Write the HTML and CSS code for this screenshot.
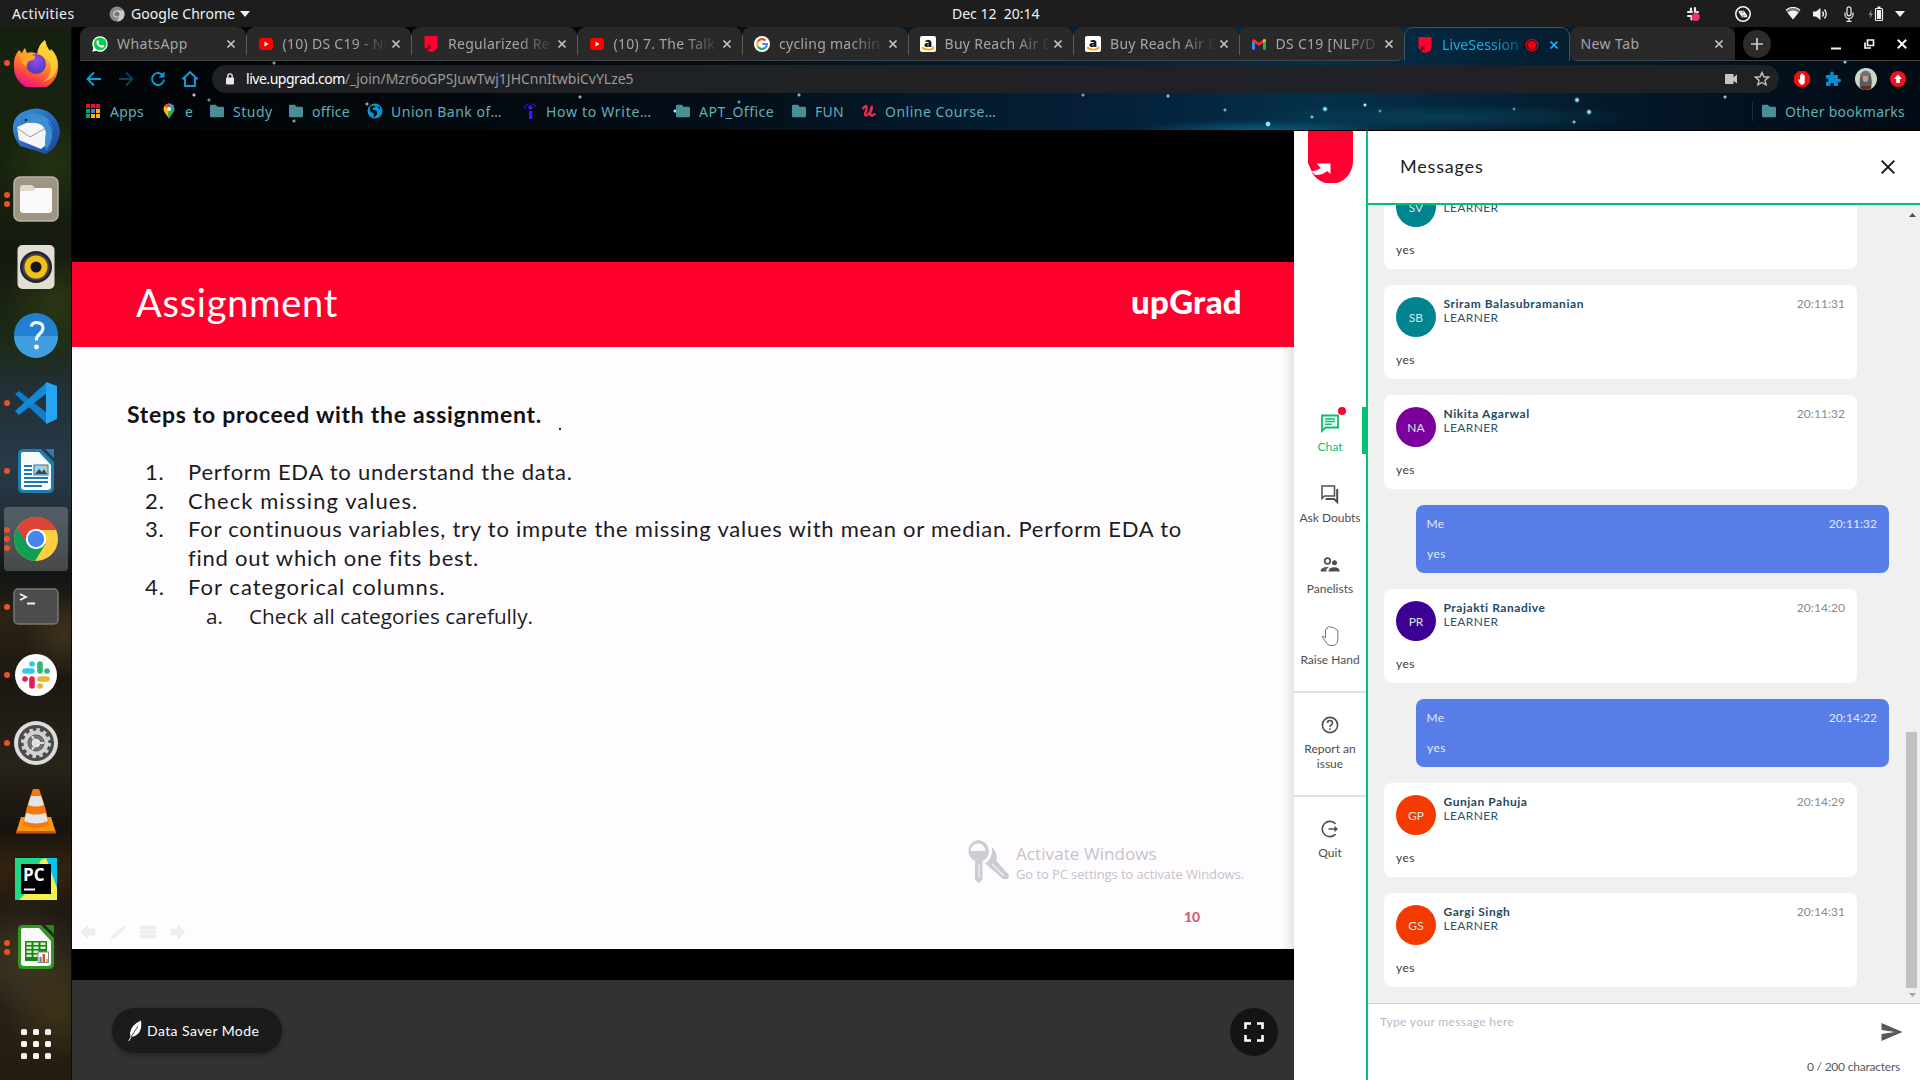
FILE: index.html
```html
<!DOCTYPE html>
<html lang="en">
<head>
<meta charset="utf-8">
<title>LiveSession</title>
<link rel="stylesheet" href="styles.css">
</head>
<body>
<svg class="defs" width="0" height="0" aria-hidden="true">
  <defs>
    <symbol id="x" viewBox="0 0 10 10"><path d="M1.5 1.5l7 7M8.5 1.5l-7 7" stroke="currentColor" stroke-width="1.7" fill="none"/></symbol>
    <symbol id="folder" viewBox="0 0 16 16"><path d="M1 3q0-1.200 1.200-1.200h4.600l1.700 2h5.300q1.200 0 1.200 1.200v8q0 1.200-1.200 1.200H2.200Q1 14.200 1 13z" fill="#4a8f98"/></symbol>
    <symbol id="yt" viewBox="0 0 16 16"><rect x="1" y="2" width="14" height="12" rx="3" fill="#f00"/><path d="M6.500 5.500v5L10.500 8z" fill="#fff"/></symbol>
    <symbol id="upg" viewBox="0 0 16 16"><path d="M1.500 0h13v9.500a6.500 6.500 0 0 1-9 5.800L1.500 11z" fill="#ff0030"/><path d="M4 9.500h3.500v3.500l-1-1-2 1.500-1-1L5 11z" fill="#40000c"/></symbol>
    <symbol id="amz" viewBox="0 0 16 16"><rect width="16" height="16" rx="2" fill="#fff"/><text x="8" y="10.500" font-family="Open Sans, sans-serif" font-weight="800" font-size="13" text-anchor="middle" fill="#111">a</text><path d="M2 11.500q6 4 11 1" stroke="#f90" stroke-width="1.600" fill="none"/><path d="M11.500 11h2.500v2.500" stroke="#f90" fill="none"/></symbol>
  </defs>
</svg>

<header class="topbar">
  <span class="activities">Activities</span>
  <svg class="tb-chrome" width="16" height="16" viewBox="0 0 16 16"><circle cx="8" cy="8" r="7.500" fill="#8a8a8a"/><path d="M8 4.500h6.700A7.500 7.500 0 0 1 8 15.500l3-5.800z" fill="#c9c9c9"/><circle cx="8" cy="8" r="3.600" fill="#ddd"/><circle cx="8" cy="8" r="2.600" fill="#777"/></svg>
  <span class="app-name">Google Chrome</span>
  <svg class="caret" width="10" height="6" viewBox="0 0 10 6"><path d="M0 0h10L5 6z" fill="#f2f2f2"/></svg>
  <span class="clock">Dec 12&nbsp; 20:14</span>
  <div class="tray">
    <svg width="14" height="16" viewBox="0 0 14 16"><g stroke="#e8e8e8" stroke-width="2.200" stroke-linecap="round"><path d="M5 2.500v3M9 2v4M2 6h4M11 6h1M2 10h3M5.500 10.500v3"/></g><circle cx="9.800" cy="11" r="4" fill="#f0307c"/></svg>
    <svg width="18" height="18" viewBox="0 0 18 18" fill="none" stroke="#f2f2f2"><circle cx="9" cy="9" r="7.200" stroke-width="1.600"/><path d="M5 6.500l3 0v4.500l-3-4.500M8 9l2 0M13 11.500l-3 0v-4.500l3 4.500" stroke-width="1.400"/></svg>
    <svg width="16" height="13" viewBox="0 0 16 13"><path d="M0.500 3.500Q8-2.500 15.500 3.500L8 12.500z" fill="#777"/><path d="M1 3Q8-2.200 15 3" stroke="#f2f2f2" stroke-width="1.200" fill="none"/><path d="M2.500 5.500Q8 1.500 13.500 5.500L8 12.500z" fill="#f2f2f2"/></svg>
    <svg width="16" height="14" viewBox="0 0 16 14"><path d="M0 4.500h3L7.500 1v12L3 9.500H0z" fill="#f2f2f2"/><path d="M9.500 4.500q2 2.500 0 5M11.500 2.500q3.500 4.500 0 9" stroke="#f2f2f2" stroke-width="1.300" fill="none"/></svg>
    <svg width="10" height="16" viewBox="0 0 10 16"><rect x="3" y="0.800" width="4" height="9" rx="2" fill="none" stroke="#f2f2f2" stroke-width="1.200"/><path d="M1 6.500v2a4 4 0 0 0 8 0v-2M5 12.500v2.800M2.500 15.300h5" stroke="#f2f2f2" stroke-width="1.200" fill="none"/></svg>
    <svg width="16" height="16" viewBox="0 0 16 16"><path d="M3.500 3.500L0.500 9h2l-1 4L5 7.500H3z" fill="#888"/><rect x="7.500" y="2.500" width="7" height="12" rx="1" fill="none" stroke="#f2f2f2" stroke-width="1.200"/><rect x="9" y="4" width="4" height="9" fill="#f2f2f2"/><rect x="9.500" y="0.500" width="3" height="2" fill="#f2f2f2"/></svg>
    <svg width="10" height="6" viewBox="0 0 10 6"><path d="M0 0h10L5 6z" fill="#f2f2f2"/></svg>
  </div>
</header>

<div class="desktop">
  <nav class="dock">
    <div class="app"><div class="dots"><i></i></div>
      <svg width="46" height="48" viewBox="0 0 46 48"><defs><linearGradient id="ff" x1=".8" y1="0" x2=".4" y2="1"><stop offset="0" stop-color="#fff04a"/><stop offset=".45" stop-color="#ff9a1f"/><stop offset=".75" stop-color="#ff4a3d"/><stop offset="1" stop-color="#e2128a"/></linearGradient><radialGradient id="fp" cx=".5" cy=".3" r=".7"><stop offset="0" stop-color="#9a4cf0"/><stop offset="1" stop-color="#4a3ab8"/></radialGradient></defs><path d="M6 11l3 3q1-3 3-5l2 5q6-2 10 1 1-9 8-14 1 7 5 11l1-2q8 7 7 19A22 22 0 0 1 1 28Q0 18 6 11z" fill="url(#ff)"/><path d="M32 1q-8 7-6 15 12 3 12 14-1 9-9 13 15-3 15-18 0-9-7-13-4-5-5-11z" fill="#ffd43a" opacity=".75"/><circle cx="23" cy="25" r="10" fill="url(#fp)"/><path d="M6 16q8-3 16 1 1 4-6 5-3 3-2 6-5-2-6-8z" fill="#ffa52b"/></svg></div>
    <div class="app"><div class="dots"></div>
      <svg width="48" height="48" viewBox="0 0 48 48"><defs><linearGradient id="tbg" x1="0" y1="0" x2="1" y2="1"><stop offset="0" stop-color="#3b97dd"/><stop offset="1" stop-color="#1a3f9c"/></linearGradient></defs><path d="M13 4Q26-2 38 6q10 8 10 20-2 15-14 21l-6-2-20-6Q-3 25 3 12q4-6 10-8z" fill="url(#tbg)"/><path d="M5 20l14-6 15 5v19l-5 4-22-9z" fill="#f6f6f8"/><path d="M5 21l13 9 16-9" fill="none" stroke="#999" stroke-width="1"/><path d="M12 11q8-8 20-2 10 6 9 20-1 9-7 15-2-8 0-19Q31 14 18 16q-5 0-6-5z" fill="#3a8fd4"/><path d="M36 14q10 14-1 28M40 15q8 12-1 24" fill="none" stroke="#1c56ac"/><circle cx="14" cy="13" r="1.500" fill="#4a2020"/></svg></div>
    <div class="app"><div class="dots"><i></i><i></i></div>
      <svg width="46" height="46" viewBox="0 0 46 46"><rect x="1" y="1" width="44" height="44" rx="6" fill="#9d9684" stroke="#b9b3a3" stroke-width="1.500"/><path d="M7 12q0-3 3-3h9l3 3h14q3 0 3 3v18H7z" fill="#ded9cb"/><path d="M7 16q0-1 2-1h11l3-3h14q2 0 2 2v20q0 3-3 3H10q-3 0-3-3z" fill="#fafafa"/></svg></div>
    <div class="app"><div class="dots"></div>
      <svg width="40" height="46" viewBox="0 0 40 46"><rect x="1.500" y="1" width="37" height="44" rx="5" fill="#e2ded3"/><circle cx="20" cy="23" r="16" fill="#26242e"/><circle cx="20" cy="23" r="13.500" fill="#44434c"/><circle cx="20" cy="23" r="11.500" fill="#f2c118"/><circle cx="20" cy="23" r="5.500" fill="#17151b"/></svg></div>
    <div class="app"><div class="dots"></div>
      <svg width="46" height="46" viewBox="0 0 46 46"><circle cx="23" cy="23" r="22" fill="#2380d0"/><path d="M1 24h44a22 22 0 0 1-44 0z" fill="#419fe0"/><path d="M18 14.500q1.500-4 6-4 6 .5 6 5.500 0 3-3.500 6t-3 6.500" fill="none" stroke="#fff" stroke-width="3"/><circle cx="23.500" cy="35" r="2.400" fill="#fff"/></svg></div>
    <div class="app"><div class="dots"><i></i></div>
      <svg width="44" height="44" viewBox="0 0 44 44"><path d="M1 13l4-3 28 22v11z" fill="#0f7ccc"/><path d="M1 30l4 4L33 12V1z" fill="#1588d8"/><path d="M32 1l11 4v33l-11 5z" fill="#27a5f4"/></svg></div>
    <div class="app"><div class="dots"><i></i></div>
      <svg width="38" height="46" viewBox="0 0 38 46"><path d="M6 1h18l13 13v26q0 5-5 5H6q-5 0-5-5V6q0-5 5-5z" fill="#1f7cb0"/><path d="M28 1h9v9z" fill="#2b7fae"/><path d="M6 4h16l12 13v22q0 3-3 3H7q-3 0-3-3V6q0-2 2-2z" fill="#fafafa"/><path d="M7 18h8M7 22h8M7 26h8M7 30h24M7 34h24M7 38h18" stroke="#1f7cb0" stroke-width="2"/><rect x="17" y="17" width="14" height="10" fill="#9ad4f0" stroke="#1f7cb0"/><path d="M18 26l4-5 3 3 2-3 3 5z" fill="#444"/><path d="M27 18h3v3z" fill="#fb3"/></svg></div>
    <div class="app active"><div class="dots"><i></i><i></i><i></i></div>
      <svg width="46" height="46" viewBox="0 0 46 46"><circle cx="23" cy="23" r="22" fill="#ffcd40"/><path d="M23 23L4 12A22 22 0 0 0 22 45l10.500-17z" fill="#129d57"/><path d="M4 12a22 22 0 0 1 39.500 2H23l-9.500 13z" fill="#dc4437"/><circle cx="23" cy="23" r="10.200" fill="#fff"/><circle cx="23" cy="23" r="8.200" fill="#4285f4"/></svg></div>
    <div class="app"><div class="dots"><i></i></div>
      <svg width="46" height="38" viewBox="0 0 46 38"><rect x="1" y="1" width="44" height="35" rx="4" fill="#4c4c4c" stroke="#777" stroke-width="1.500"/><path d="M7 6l6 3-6 3M14 15.500h8" stroke="#f2f2f2" stroke-width="1.800" fill="none"/></svg></div>
    <div class="app"><div class="dots"><i></i></div>
      <svg width="42" height="42" viewBox="0 0 42 42"><circle cx="21" cy="21" r="21" fill="#fff"/><g stroke-width="5.600" stroke-linecap="round"><path d="M10 17h7M17 10h.1" stroke="#36c5f0"/><path d="M25 10v7M32 17h.1" stroke="#2eb67d"/><path d="M25 25h7M25 32h.1" stroke="#ecb22e"/><path d="M17 25v7M10 25h.1" stroke="#e01e5a"/></g></svg></div>
    <div class="app"><div class="dots"><i></i></div>
      <svg width="46" height="46" viewBox="0 0 46 46"><circle cx="23" cy="23" r="22" fill="#dcdcdc"/><circle cx="23" cy="23" r="18" fill="#4a4a4a"/><circle cx="23" cy="23" r="13.500" fill="none" stroke="#d2d2d2" stroke-width="3" stroke-dasharray="3.500 3.570"/><circle cx="23" cy="23" r="10.500" fill="none" stroke="#d2d2d2" stroke-width="4"/><circle cx="23" cy="23" r="6.500" fill="none" stroke="#777" stroke-width="2.500"/><circle cx="23" cy="23" r="4.500" fill="#e5e5e5"/><path d="M23 23h8M23 23l-4-7M23 23l-4 7" stroke="#ddd" stroke-width="2"/></svg></div>
    <div class="app"><div class="dots"></div>
      <svg width="42" height="46" viewBox="0 0 42 46"><path d="M6 29h30l5 16H1z" fill="#fb9414"/><path d="M1 43h40v2.500H1z" fill="#c95a0a"/><path d="M18 1h6q7 18 10 36-13 6-26 0Q11 19 18 1z" fill="#f47a0c"/><path d="M16 8h10l3 9q-8 3-16 0zM11.500 25q9.500 3 19 0l2.500 8q-12 5-24 0z" fill="#e3e6e8"/></svg></div>
    <div class="app"><div class="dots"></div>
      <svg width="42" height="42" viewBox="0 0 42 42"><rect width="42" height="42" fill="#21d789"/><path d="M32 0h10v30L30 12z" fill="#07c3f2"/><path d="M26 2l5-2 11 30v12H4l6-6z" fill="#f5f04d"/><rect x="6" y="6" width="30" height="30" fill="#000"/><text x="8" y="23" font-family="Open Sans, sans-serif" font-weight="700" font-size="17" fill="#fff">PC</text><path d="M9 31.500h11" stroke="#fff" stroke-width="2"/></svg></div>
    <div class="app"><div class="dots"><i></i><i></i></div>
      <svg width="38" height="46" viewBox="0 0 38 46"><path d="M6 1h18l13 13v26q0 5-5 5H6q-5 0-5-5V6q0-5 5-5z" fill="#2e9a1f"/><path d="M28 1h9v9z" fill="#258a17"/><path d="M6 4h16l12 13v22q0 3-3 3H7q-3 0-3-3V6q0-2 2-2z" fill="#fafafa"/><rect x="8" y="17" width="22" height="20" fill="#1d8413"/><path d="M9.500 18.500h5v2.500h-5zM16.500 18.500h5v2.500h-5zM23.500 18.500h5v2.500h-5zM9.500 22.500h5V25h-5zM16.500 22.500h5V25h-5zM23.500 22.500h5V25h-5zM9.500 26.500h5V29h-5zM16.500 26.500h5V29h-5zM9.500 30.500h5V33h-5zM16.500 30.500h5V33h-5z" fill="#d3f0cd"/><rect x="21" y="28" width="10.500" height="10.500" fill="#fff" stroke="#888"/><path d="M22.500 33h2v5h-2z" fill="#2a8ccd"/><path d="M25.500 30h2.500v8h-2.500z" fill="#e1551c"/><path d="M29 35h2v3h-2z" fill="#f3b32a"/></svg></div>
    <svg class="grid-icon" width="30" height="30" viewBox="0 0 30 30" fill="#f4f4f4"><rect width="6" height="6" rx="1.500"/><rect x="12" width="6" height="6" rx="1.500"/><rect x="24" width="6" height="6" rx="1.500"/><rect y="12" width="6" height="6" rx="1.500"/><rect x="12" y="12" width="6" height="6" rx="1.500"/><rect x="24" y="12" width="6" height="6" rx="1.500"/><rect y="24" width="6" height="6" rx="1.500"/><rect x="12" y="24" width="6" height="6" rx="1.500"/><rect x="24" y="24" width="6" height="6" rx="1.500"/></svg>
  </nav>

  <div class="browser">
    <div class="chrome">
      <div class="tabstrip">
        <div class="tabs">
          <div class="tab"><svg class="fav" viewBox="0 0 16 16"><path d="M8 .2a7.800 7.800 0 1 1-3.800 14.600L.3 15.800l1-3.900A7.800 7.800 0 0 1 8 .2z" fill="#fff"/><circle cx="8.100" cy="7.900" r="6.400" fill="#0bcb4c"/><path d="M5.500 4.300l1 .1.800 1.900-.7 1q1 1.700 2.700 2.400l.9-1 2 1q-.3 2-2.400 2-4.500-.8-5.400-5.200.1-1.600 1.100-2.200z" fill="#fff"/></svg><span class="title">WhatsApp</span><svg class="close"><use href="#x"/></svg></div>
          <div class="tab"><svg class="fav"><use href="#yt"/></svg><span class="title">(10) DS C19 - NL</span><svg class="close"><use href="#x"/></svg></div>
          <div class="tab"><svg class="fav"><use href="#upg"/></svg><span class="title">Regularized Re</span><svg class="close"><use href="#x"/></svg></div>
          <div class="tab"><svg class="fav"><use href="#yt"/></svg><span class="title">(10) 7. The Talk</span><svg class="close"><use href="#x"/></svg></div>
          <div class="tab"><svg class="fav" viewBox="0 0 16 16"><circle cx="8" cy="8" r="8" fill="#fff"/><g fill="none" stroke-width="2.200"><path d="M11.500 4.500A5 5 0 0 0 3.800 5.500" stroke="#ea4335"/><path d="M3.800 5.500a5 5 0 0 0 0 5" stroke="#fbbc05"/><path d="M3.800 10.500a5 5 0 0 0 7.500 1.200" stroke="#34a853"/><path d="M11.300 11.700Q13 10 12.900 8H8.300" stroke="#4285f4"/></g></svg><span class="title">cycling machin</span><svg class="close"><use href="#x"/></svg></div>
          <div class="tab"><svg class="fav"><use href="#amz"/></svg><span class="title">Buy Reach Air E</span><svg class="close"><use href="#x"/></svg></div>
          <div class="tab"><svg class="fav"><use href="#amz"/></svg><span class="title">Buy Reach Air E</span><svg class="close"><use href="#x"/></svg></div>
          <div class="tab last-idle"><svg class="fav" viewBox="0 0 16 16"><path d="M1 4v9.500h3V7l4 3 4-3v6.500h3V4l-2-1-5 3.700L3 3z" fill="#e33"/><path d="M1 6v7.500h3V7z" fill="#4285f4"/><path d="M12 7v6.500h3V5z" fill="#34a853"/><path d="M12 3.600V7l3-2V4q-1.500-2-3-.4z" fill="#fbbc04"/></svg><span class="title">DS C19 [NLP/D</span><svg class="close"><use href="#x"/></svg></div>
          <div class="tab current"><svg class="fav"><use href="#upg"/></svg><span class="title">LiveSession</span><svg class="rec" width="14" height="14" viewBox="0 0 14 14"><circle cx="7" cy="7" r="5.700" fill="none" stroke="#e00010" stroke-width="1.200"/><circle cx="7" cy="7" r="4.200" fill="#f00015"/></svg><svg class="close"><use href="#x"/></svg></div>
          <div class="tab newtab"><span class="title">New Tab</span><svg class="close"><use href="#x"/></svg></div>
        </div>
        <div class="strip-end">
          <svg width="28" height="28" viewBox="0 0 28 28"><circle cx="14" cy="14" r="14" fill="#2b2b2b"/><path d="M14 8v12M8 14h12" stroke="#ccc" stroke-width="1.700"/></svg>
          <div class="winbtns">
            <svg width="12" height="12" viewBox="0 0 12 12"><path d="M1 10.500h10" stroke="#f4f4f4" stroke-width="2"/></svg>
            <svg width="12" height="12" viewBox="0 0 12 12"><path d="M4.500 2h6v5.500h-6zM2 4.500V10h6" fill="none" stroke="#f4f4f4" stroke-width="1.700"/></svg>
            <svg width="12" height="12" viewBox="0 0 10 10" color="#f4f4f4"><use href="#x"/></svg>
          </div>
        </div>
      </div>

      <div class="toolbar">
        <svg width="18" height="18" viewBox="0 0 18 18" fill="none" stroke="#08a0e0" stroke-width="1.900"><path d="M16 9H3M9 2.500L2.500 9 9 15.500"/></svg>
        <svg width="18" height="18" viewBox="0 0 18 18" fill="none" stroke="#0b4256" stroke-width="1.900"><path d="M2 9h13M9 2.500L15.500 9 9 15.500"/></svg>
        <svg width="18" height="18" viewBox="0 0 18 18"><path d="M15 9.500A6 6 0 1 1 13 4.500" fill="none" stroke="#08a0e0" stroke-width="1.900"/><path d="M15.500 1.500v6h-6z" fill="#08a0e0"/></svg>
        <svg width="18" height="18" viewBox="0 0 18 18" fill="none" stroke="#08a0e0" stroke-width="1.900"><path d="M1.500 9.300L9 2l7.500 7.300M4 8v8h10V8"/></svg>
        <div class="omnibox">
          <svg width="10" height="12" viewBox="0 0 10 12"><rect x="1" y="4.500" width="8" height="7" rx="1" fill="#e8e8e8"/><path d="M2.800 5V3a2.200 2.200 0 0 1 4.400 0v2" fill="none" stroke="#e8e8e8" stroke-width="1.300"/></svg>
          <span class="url"><b>live.upgrad.com</b><span class="path">/_join/Mzr6oGPSJuwTwj1JHCnnItwbiCvYLze5</span></span>
          <svg width="14" height="10" viewBox="0 0 14 10"><path d="M1 0h8.500v3.300L13 .5v9L9.500 6.700V10H1z" fill="#c4c4c4"/></svg>
          <svg width="16" height="16" viewBox="0 0 16 16"><path d="M8 1.500l1.900 4.300 4.700.4-3.600 3.100 1.100 4.600L8 11.500l-4.100 2.400L5 9.300 1.400 6.200l4.700-.4z" fill="none" stroke="#c4c4c4" stroke-width="1.400"/></svg>
        </div>
        <div class="exts">
          <svg width="18" height="18" viewBox="0 0 18 18"><path d="M5.500 1h7L17 5.500v7L12.500 17h-7L1 12.500v-7z" fill="#f20d0d"/><path d="M5 9.500l1.300-.3.700 1V4.800h1.100v4-5.300h1.200v5-4.500h1.200v4.800-3.600h1.200V11.500q0 3.300-3 3.300-1.700 0-2.500-2z" fill="#fff"/></svg>
          <svg width="18" height="18" viewBox="0 0 18 18"><path d="M2 5h4.500q-1-3.500 1.500-3.500T9.500 5H14v4q3-1 3 1.500T14 12v4H10q.5-3-1.800-3T6.500 16H2v-4q2.500 0 2.500-2T2 8.500z" fill="#058fd0"/></svg>
          <svg width="22" height="22" viewBox="0 0 22 22"><circle cx="11" cy="11" r="11" fill="#cfd6cc"/><path d="M5 20q-1-9 1-14 5-6 9 0 3 5 1 14-6 4-11 0z" fill="#555b66"/><ellipse cx="10.500" cy="10" rx="3" ry="4" fill="#c79a80"/><path d="M5 6q6-7 11 0l-1 2H6z" fill="#6e747c"/><path d="M6 18h10v2.500q-5 2.500-10 0z" fill="#632d18"/></svg>
          <svg width="16" height="16" viewBox="0 0 16 16"><circle cx="8" cy="8" r="8" fill="#f01020"/><path d="M8 3.500L12 8H9.800v4H6.200V8H4z" fill="#fff"/></svg>
        </div>
      </div>

      <div class="bookmarks">
        <div class="bm apps"><svg viewBox="0 0 16 16"><path d="M1 1h4v4H1zM6 1h4v4H6zM11 1h4v4h-4z" fill="#e8112d"/><path d="M1 6h4v4H1zM1 11h4v4H1z" fill="#18a05a"/><path d="M6 6h4v4H6z" fill="#3b7ef0"/><path d="M11 6h4v4h-4zM6 11h4v4H6zM11 11h4v4h-4z" fill="#fbb20a"/><path d="M5.500 0v16M10.500 0v16M0 5.500h16M0 10.500h16" stroke="#02080c"/></svg><span>Apps</span></div>
        <div class="bm"><svg viewBox="0 0 16 16"><path d="M8 .5a5.500 5.500 0 0 0-5.500 5.500q0 2 1.500 4L8 15.500z" fill="#fbbc04"/><path d="M8 .5A5.500 5.500 0 0 1 13.500 6q0 2-1.500 4L8 15.500 7 12z" fill="#34a853"/><path d="M8 .5A5.500 5.500 0 0 0 3.300 3L8 6z" fill="#ea4335"/><path d="M8 .5A5.500 5.500 0 0 1 13 4L8 7z" fill="#4285f4"/><circle cx="8" cy="6" r="2" fill="#fff"/></svg><span>e</span></div>
        <div class="bm wide"><svg><use href="#folder"/></svg><span>Study</span></div>
        <div class="bm"><svg><use href="#folder"/></svg><span>office</span></div>
        <div class="bm wide"><svg viewBox="0 0 16 16"><circle cx="8" cy="8" r="7.500" fill="#0a95d5"/><path d="M3 4q3-3 6 0-4 0-3 3 5 0 4 4-1 3-4 3 2-3 0-4Q2 9 3 4zM10 3l3 1v3z" fill="#021018"/></svg><span>Union Bank of…</span></div>
        <div class="bm wider"><svg viewBox="0 0 16 16"><circle cx="8.500" cy="4.500" r="2.200" fill="#4a10ff"/><path d="M7 8h3.200v8H7z" fill="#4a10ff"/><path d="M2.500 6Q3 1 7 .8M10 .8q3 .7 3.500 3" stroke="#4a10ff" fill="none"/></svg><span>How to Write…</span></div>
        <div class="bm wide"><svg><use href="#folder"/></svg><span>APT_Office</span></div>
        <div class="bm"><svg><use href="#folder"/></svg><span>FUN</span></div>
        <div class="bm wide"><svg viewBox="0 0 16 16"><path d="M1.500 6Q5 1.500 5.500 3.500T4 11q0 3 3.500 0T11 3Q8.500 9 9.500 11.500t5-1" fill="none" stroke="#ef2b4c" stroke-width="2.300"/></svg><span>Online Course…</span></div>
        <div class="bm other"><svg><use href="#folder"/></svg><span>Other bookmarks</span></div>
      </div>
    </div>

    <div class="page">
      <main class="player">
        <section class="slide">
          <div class="slide-head"><h1>Assignment</h1><span class="brand">upGrad</span></div>
          <div class="slide-body">
            <h2>Steps to proceed with the assignment.</h2>
            <ol class="steps">
              <li><span>1.</span><span>Perform EDA to understand the data.</span></li>
              <li class="loose"><span>2.</span><span>Check missing values.</span></li>
              <li><span>3.</span><span>For continuous variables, try to impute the missing values with mean or median. Perform EDA to<br>find out which one fits best.</span></li>
              <li class="loose"><span>4.</span><span>For categorical columns.</span></li>
              <li class="sub"><span>a.</span><span>Check all categories carefully.</span></li>
            </ol>
            <i class="speck"></i>
            <div class="activate">
              <svg width="42" height="46" viewBox="0 0 42 46"><path d="M11 1a11 11 0 0 1 4.500 21v18.500L12 44l-4-3V22A11 11 0 0 1 11 1zM3.500 12h15q-1-7.500-7.500-7.500T3.500 12z" fill="#cfccd1"/><path d="M25 8q6 6 4.500 14L42 36l-1 4h-5L20 26l-2-1.500Q26 20 25 8z" fill="#cfccd1"/><path d="M12 25v14M25 25l12 12" stroke="#f1eff2" stroke-width="1.300"/></svg>
              <div><p class="big">Activate Windows</p><p class="small">Go to PC settings to activate Windows.</p></div>
            </div>
            <span class="pageno">10</span>
            <div class="slide-nav">
              <svg width="16" height="16" viewBox="0 0 16 16"><path d="M1 8l7-7v4h7v6H8v4z"/></svg>
              <svg width="16" height="16" viewBox="0 0 16 16"><path d="M1 15l2-4L14 2l1 2L6 13z"/></svg>
              <svg width="16" height="16" viewBox="0 0 16 16"><path d="M0 2h16v3H0zM0 6.500h16v3H0zM0 11h16v3H0z"/></svg>
              <svg width="16" height="16" viewBox="0 0 16 16"><path d="M15 8L8 1v4H1v6h7v4z"/></svg>
            </div>
          </div>
        </section>
        <footer class="controls">
          <div class="saver"><svg width="14" height="22" viewBox="0 0 14 22"><path d="M13 .5Q3 5 2 13l.5 4L.3 21h1l2.200-4Q11 16 13 8q.7-4 0-7.500z" fill="#fff"/><path d="M3 17L10 6" stroke="#1b1b1b" stroke-width=".8"/></svg><span>Data Saver Mode</span></div>
          <div class="full"><svg width="20" height="20" viewBox="0 0 20 20"><path d="M1.500 7V1.500H7M13 1.500h5.500V7M18.500 13v5.500H13M7 18.500H1.500V13" fill="none" stroke="#fff" stroke-width="2.600"/></svg></div>
        </footer>
      </main>

      <aside class="rail">
        <svg class="logo" width="45" height="52" viewBox="0 0 46 52" preserveAspectRatio="none"><path d="M0 0h46v30a22.500 22.500 0 0 1-41 13L0 32z" fill="#ff0030"/><path d="M9 32.500h14V43l-3.500-3q-5 4.500-12 4L3 40q5 1 10-3z" fill="#fff"/></svg>
        <div class="item on"><svg width="20" height="20" viewBox="0 0 20 20" fill="none" stroke="currentColor" stroke-width="1.800"><path d="M2 18V2.500h16v12H5.500z"/><path d="M5 6h10M5 8.600h10M5 11.200h7" stroke-width="1.500"/></svg><i class="badge"></i><span>Chat</span></div>
        <div class="item"><svg width="20" height="20" viewBox="0 0 20 20" fill="none" stroke="currentColor" stroke-width="1.500"><path d="M2 14.500V2h12.500v10H4.500z"/><path d="M17.200 5v13l-3-3H5.500" stroke-width="2"/></svg><span>Ask Doubts</span></div>
        <div class="item"><svg width="20" height="20" viewBox="0 0 20 20" fill="currentColor"><circle cx="7.500" cy="6" r="2.800" fill="none" stroke="currentColor" stroke-width="1.700"/><circle cx="14.500" cy="7.800" r="2.500"/><path d="M.5 16.500q0-4.500 7-4.500l1.500.1q-2 1-2.500 2.500-3 0-3.500.4h3.500v1.500zM8.500 16.500q0-4.300 6-4.300 5 0 5.300 4.300z"/></svg><span>Panelists</span></div>
        <div class="item"><svg width="20" height="20" viewBox="0 0 20 20" fill="none" stroke="#777" stroke-width="1"><path d="M5.500 12V4q.2-1.500 1.800-1.300V1.500Q9-.3 10.500 1.200q1.500-.8 2.700.7 1.800-.4 2.300 1.300 2.300 0 2.300 2V14q-.4 5-5 5.500H10q-2 0-3.300-2.500L2 10.500Q3.500 9 5.500 12z"/></svg><span>Raise Hand</span></div>
        <div class="item tall"><svg width="20" height="20" viewBox="0 0 20 20" fill="none" stroke="currentColor" stroke-width="1.600"><circle cx="10" cy="10" r="7.600"/><path d="M7.500 8q0-2.500 2.500-2.500T12.500 8q0 1-1.300 2-1.200.8-1.200 2M10 13.200v1.600"/></svg><span>Report an<br>issue</span></div>
        <div class="item tall"><svg width="20" height="20" viewBox="0 0 20 20" fill="none" stroke="currentColor" stroke-width="1.600"><path d="M15.500 4.900A7.600 7.600 0 1 0 15.500 15.100M8.500 10h7.500"/><path d="M14.500 6.800v6.400L18 10z" fill="currentColor" stroke="none"/></svg><span>Quit</span></div>
      </aside>

      <section class="chat">
        <header><span>Messages</span><svg width="16" height="16" viewBox="0 0 16 16"><path d="M1.700 1.700l12.600 12.600M14.300 1.700L1.700 14.300" stroke="#111" stroke-width="1.900"/></svg></header>
        <div class="scroll">
          <div class="list">
            <article class="msg"><div class="av teal">SV</div><div class="who"><b>&nbsp;</b><span>LEARNER</span></div><time></time><p>yes</p></article>
            <article class="msg"><div class="av teal">SB</div><div class="who"><b>Sriram Balasubramanian</b><span>LEARNER</span></div><time>20:11:31</time><p>yes</p></article>
            <article class="msg"><div class="av purple">NA</div><div class="who"><b>Nikita Agarwal</b><span>LEARNER</span></div><time>20:11:32</time><p>yes</p></article>
            <article class="msg me"><div class="who"><span>Me</span></div><time>20:11:32</time><p>yes</p></article>
            <article class="msg"><div class="av indigo">PR</div><div class="who"><b>Prajakti Ranadive</b><span>LEARNER</span></div><time>20:14:20</time><p>yes</p></article>
            <article class="msg me"><div class="who"><span>Me</span></div><time>20:14:22</time><p>yes</p></article>
            <article class="msg"><div class="av orange">GP</div><div class="who"><b>Gunjan Pahuja</b><span>LEARNER</span></div><time>20:14:29</time><p>yes</p></article>
            <article class="msg"><div class="av orange">GS</div><div class="who"><b>Gargi Singh</b><span>LEARNER</span></div><time>20:14:31</time><p>yes</p></article>
          </div>
          <div class="bar"><svg width="7" height="4" viewBox="0 0 7 4"><path d="M0 4h7L3.500 0z" fill="#505050"/></svg><i></i><svg width="7" height="4" viewBox="0 0 7 4"><path d="M0 0h7L3.500 4z" fill="#a0a0a0"/></svg></div>
        </div>
        <div class="compose">
          <span class="ph">Type your message here</span>
          <svg width="22" height="18" viewBox="0 0 22 18"><path d="M.5 0L21.500 9 .5 18v-7L14 9 .5 7z" fill="#58585a"/></svg>
          <span class="count">0 / 200 characters</span>
        </div>
      </section>
    </div>
  </div>
</div>
</body>
</html>
```
FILE: styles.css
```css
* { box-sizing: border-box; }
html, body { margin: 0; height: 100%; overflow: hidden; }
body { display: flex; flex-direction: column; height: 1080px; font-family: "Noto Sans", sans-serif; background: #000; }
svg { display: block; flex: none; }
.defs { position: absolute; }
p, h1, h2, ol { margin: 0; padding: 0; }

/* GNOME top bar */
.topbar { height: 27px; flex: none; background: #1d1d1d; color: #f2f2f2; display: flex; align-items: center; font-size: 14px; padding: 0 15px 0 12px; line-height: 27px; }
.activities { width: 97px; letter-spacing: .42px; }
.app-name { margin-left: 6px; width: 108px; letter-spacing: .05px; }
.caret { margin-left: 1px; }
.clock { margin-left: 702px; width: 88px; white-space: nowrap; }
.tray { margin-left: auto; display: flex; align-items: center; gap: 12px; }
.tray svg:nth-child(2) { margin-left: 22px; }
.tray svg:nth-child(3) { margin-left: 21px; }
.tray svg:nth-child(5) { margin-left: 3px; }
.tray svg:nth-child(6) { margin-left: 2px; }
.tray svg:nth-child(7) { margin-left: -1px; }

.desktop { flex: 1; display: flex; min-height: 0; }

/* Dock */
.dock { width: 72px; flex: none; padding-top: 2px; display: flex; flex-direction: column; border-right: 1px solid #0a0a0a;
  background:
    radial-gradient(circle at 70% 13%, rgba(60,80,20,.35), transparent 50px),
    radial-gradient(circle at 80% 26%, rgba(70,85,15,.4), transparent 55px),
    radial-gradient(circle at 30% 88%, rgba(95,78,45,.45), transparent 60px),
    radial-gradient(circle at 80% 93%, rgba(90,75,30,.45), transparent 55px),
    radial-gradient(circle at 90% 58%, rgba(90,75,40,.4), transparent 40px),
    linear-gradient(#15200f 0, #18230f 13%, #14190f 22%, #1c2b17 30%, #22313a 35%, #283a47 42%, #202d36 47%, #131414 52%, #2c2314 56%, #1b1711 62%, #29241a 70%, #17130e 76%, #33230f 80%, #1c1812 84%, #28231a 90%, #241c0f 100%); }
.app { position: relative; height: 68px; flex: none; display: flex; align-items: center; justify-content: center; }
.app.active::before { content: ""; position: absolute; inset: 2px 3px 2px 4px; background: rgba(255,255,255,.22); border-radius: 4px; }
.dots { position: absolute; left: 4px; top: 0; height: 68px; display: flex; flex-direction: column; justify-content: center; gap: 3px; }
.app > svg { z-index: 1; }
.dots i { width: 6px; height: 6px; border-radius: 50%; background: #e95420; }
.grid-icon { margin: 48px 0 0 21px; }

/* Browser chrome */
.browser { flex: 1; display: flex; flex-direction: column; min-width: 0; }
.chrome { height: 104px; flex: none; border-bottom: 1px solid #000;
  background:
    radial-gradient(circle at 603px 84px, #a8e8ff 0 1px, transparent 2px),
    radial-gradient(circle at 122px 68px, #b8c4cc 0 1px, transparent 2px),
    radial-gradient(circle at 137px 73px, #77828a 0 1px, transparent 2px),
    radial-gradient(circle at 202px 36px, #8a949c 0 1px, transparent 2px),
    radial-gradient(circle at 222px 94px, #8a949c 0 1px, transparent 2px),
    radial-gradient(circle at 295px 77px, #9aa6b0 0 1px, transparent 2px),
    radial-gradient(circle at 508px 70px, #9aa6b0 0 1px, transparent 2px),
    radial-gradient(circle at 727px 68px, #8ab0c8 0 1px, transparent 2px),
    radial-gradient(circle at 667px 75px, #6a90a8 0 1px, transparent 2px),
    radial-gradient(circle at 1011px 68px, #6aa0b8 0 1px, transparent 2px),
    radial-gradient(circle at 1096px 69px, #9ac8dc 0 1px, transparent 2px),
    radial-gradient(circle at 1153px 83px, #7aa8bc 0 1px, transparent 2px),
    radial-gradient(circle at 1196px 97px, #96ecff 0 1.500px, transparent 3px),
    radial-gradient(circle at 1253px 82px, #8ee4ff 0 1px, transparent 3px),
    radial-gradient(circle at 1293px 78px, #9fd 0 1px, transparent 2px),
    radial-gradient(circle at 1240px 90px, #6ac0e0 0 1px, transparent 2px),
    radial-gradient(circle at 1308px 84px, #5aa0c0 0 .5px, transparent 2px),
    radial-gradient(circle at 1442px 82px, #5aa0c0 0 .5px, transparent 2px),
    radial-gradient(circle at 1505px 73px, #8ee4ff 0 1px, transparent 3px),
    radial-gradient(circle at 1517px 85px, #8ee4ff 0 1px, transparent 3px),
    radial-gradient(circle at 1502px 95px, #6ac0e0 0 1px, transparent 2px),
    radial-gradient(circle at 1653px 70px, #8ac8e0 0 1px, transparent 2px),
    radial-gradient(circle at 1773px 35px, #8ac8e0 0 1px, transparent 2px),
    radial-gradient(ellipse at 1190px 104px, rgba(10,110,150,.75), transparent 130px),
    radial-gradient(ellipse at 1370px 90px, rgba(10,70,95,.7), transparent 200px),
    linear-gradient(90deg, #010407 0, #02080c 340px, #030d16 620px, #041a2c 880px, #04233c 1080px, #05304a 1250px, #041c2e 1500px, #031220 1660px, #020b14 1848px); }
.tabstrip { height: 34px; display: flex; }
.tabs { width: 1663px; flex: none; padding-left: 8px; display: flex; background: linear-gradient(#000, #000) 0 0 / 20px 100% no-repeat; }
.tab { flex: 0 1 165.600px; min-width: 0; display: flex; align-items: center; padding: 0 10px 0 12px; background: #292929; border-radius: 9px 9px 0 0; color: #a6a6a6; border-bottom: 1px solid #444; }
.tab + .tab { background: linear-gradient(#5a5a5a, #5a5a5a) 0 8px / 1px 20px no-repeat, #292929; }
.tab .fav { width: 16px; height: 16px; margin-right: 9px; overflow: visible; }
.tab .close { width: 10px; height: 10px; color: #c4c4c4; }
.tab .title { flex: 1; min-width: 0; white-space: nowrap; font-size: 14px; letter-spacing: .28px; line-height: 30px; -webkit-mask-image: linear-gradient(90deg, #000 70px, transparent 106px); mask-image: linear-gradient(90deg, #000 70px, transparent 106px); }
.tab:first-child .title, .tab.newtab .title { letter-spacing: .42px; -webkit-mask-image: none; mask-image: none; }
.tab.last-idle { border-bottom-right-radius: 8px; }
.tab + .tab.current { background: none; border: 1px solid #46525c; border-bottom: 0; color: #0cb5f0; }
.tab.current .title { letter-spacing: .1px; -webkit-mask-image: linear-gradient(90deg, #000 48px, rgba(0,0,0,.3) 82px); mask-image: linear-gradient(90deg, #000 48px, rgba(0,0,0,.3) 82px); }
.tab.current .close { color: #13c0fb; }
.tab.current .rec { margin: 0 10px 0 3px; }
.tab + .tab.newtab { background: #292929; border-radius: 9px 9px 0 8px; padding-left: 11px; }
.tab.newtab .close { margin-right: 1px; }
.strip-end { flex: 1; background: #000; display: flex; align-items: center; padding: 0 12px 0 8px; border-bottom: 1px solid #444; }
.winbtns { margin-left: auto; display: flex; gap: 21px; }

.toolbar { height: 36px; display: flex; align-items: center; padding: 0 14px 0 13px; gap: 14px; }
.omnibox { width: 1568px; height: 28px; margin-left: -1px; border-radius: 14px; background: #202124; display: flex; align-items: center; padding: 0 9px 0 13px; gap: 16px; }
.url { flex: 1; font-size: 14px; line-height: 28px; color: #9a9a9a; margin-left: -5px; white-space: nowrap; }
.url b { font-weight: 400; color: #fff; letter-spacing: -.47px; }
.url .path { letter-spacing: -.02px; }
.exts { margin-left: auto; display: flex; align-items: center; gap: 13px; }

.bookmarks { height: 28px; padding: 0 17px 0 13px; display: grid; align-items: center; grid-template-columns: 76px 48px 79px 79px 155px 153px 116px 70px 1fr 151px; color: #5fb0b8; font-size: 14px; }
.bm { display: flex; align-items: center; gap: 8px; white-space: nowrap; letter-spacing: .28px; }
.bm.apps { gap: 9px; }
.bm svg { width: 16px; height: 16px; }
.bm.wide { letter-spacing: .5px; }
.bm.wider { letter-spacing: .7px; }
.bm.other { padding-left: 8px; border-left: 1px solid #0c3350; height: 19px; }

/* Page */
.page { flex: 1; display: flex; min-height: 0; }
.player { width: 1222px; flex: none; background: #000; display: flex; flex-direction: column; padding-top: 131px; }
.slide { height: 687px; display: flex; flex-direction: column; font-family: Lato, sans-serif; }
.slide-head { height: 85px; flex: none; background: #ff002c; color: #fff; display: flex; justify-content: space-between; padding: 17px 52px 0 64px; }
.slide-head h1 { font-weight: 400; font-size: 38px; line-height: 46px; letter-spacing: .74px; }
.brand { font-weight: 900; font-size: 33px; line-height: 44px; letter-spacing: .3px; }
.slide-body { position: relative; flex: 1; background: linear-gradient(90deg, transparent 1210px, rgba(0,0,0,.09)), #fefcff; padding: 53px 0 0 55px; color: #1c1c1c; }
.slide-body h2 { font-size: 23px; line-height: 28px; letter-spacing: .7px; color: #111; }
.steps { list-style: none; margin-top: 30px; font-size: 22px; line-height: 28.700px; letter-spacing: .76px; white-space: nowrap; }
.steps li { display: grid; grid-template-columns: 43px auto; padding-left: 18px; }
.steps .loose { letter-spacing: 1.05px; }
.steps .sub { font-family: "Open Sans", sans-serif; font-size: 20.700px; letter-spacing: .04px; padding-left: 79px; }
.speck { position: absolute; left: 487px; top: 81px; width: 2px; height: 2px; background: #222; }
.activate { position: absolute; left: 895px; top: 492px; display: flex; gap: 7px; color: #c6c3c8; font-family: "Open Sans", sans-serif; }
.activate .big { font-size: 17px; line-height: 22px; letter-spacing: .08px; margin-top: 4px; }
.activate .small { font-size: 13px; line-height: 18px; letter-spacing: -.09px; }
.pageno { position: absolute; left: 1112px; top: 561px; font-weight: 900; font-size: 14px; line-height: 17px; color: #d0626e; }
.slide-nav { position: absolute; left: 8px; top: 577px; display: flex; gap: 14px; fill: #efedf0; stroke: #e6e4e7; stroke-width: .5; }
.controls { margin-top: auto; height: 100px; background: #323232; display: flex; align-items: flex-start; justify-content: space-between; padding: 28px 16px 0 40px; }
.saver { width: 170px; height: 45px; border-radius: 23px; background: #1b1b1b; box-shadow: 0 2px 5px rgba(0,0,0,.3); display: flex; align-items: center; padding-left: 16px; gap: 5px; color: #fff; font-family: Lato, sans-serif; font-size: 14px; letter-spacing: .42px; }
.full { width: 48px; height: 48px; border-radius: 50%; background: #141414; display: flex; align-items: center; justify-content: center; }

.rail { width: 72px; flex: none; background: #fff; color: #4e4e50; font-family: Lato, sans-serif; font-size: 12px; line-height: 15px; }
.logo { margin: 0 0 220px 14px; }
.item { position: relative; height: 71px; padding-top: 14px; display: flex; flex-direction: column; align-items: center; text-align: center; }
.item svg { margin-bottom: 7px; margin-top: -4px; }
.item svg + span, .item i + span { margin-top: -1px; }
.item.on { color: #07bf72; }
.item.on::after { content: ""; position: absolute; right: 0; top: 4px; width: 4px; height: 47px; background: #07bf72; }
.badge { position: absolute; left: 44px; top: 4px; width: 8px; height: 8px; border-radius: 50%; background: #ff002c; }
.item.tall { height: 104px; border-top: 2px solid #dedede; padding-top: 26px; }
.item:nth-child(6) { margin-top: 4px; }

.chat { flex: 1; min-width: 0; border-left: 2px solid #07bf72; background: #fff; display: flex; flex-direction: column; font-family: Lato, sans-serif; font-size: 12px; }
.chat > header { height: 74px; flex: none; border-bottom: 2px solid #07bf72; display: flex; align-items: center; justify-content: space-between; padding: 0 24px 0 32px; font-size: 18px; letter-spacing: .82px; color: #222; }
.chat > header span { margin-top: -2px; }
.scroll { height: 798px; flex: none; background: #f0f0f0; display: flex; justify-content: space-between; overflow: hidden; }
.list { display: flex; flex-direction: column; justify-content: flex-end; gap: 16px; padding: 0 0 16px 16px; }
.msg { width: 473px; height: 94px; flex: none; border-radius: 8px; background: #fff; display: grid; grid-template-columns: 48px 1fr auto; grid-template-rows: 56px auto; padding: 12px 12px 0 12px; color: #3c3c3c; }
.av { width: 40px; height: 40px; border-radius: 50%; color: #d8e8ea; display: flex; align-items: center; justify-content: center; font-size: 12px; }
.teal { background: #008590; } .purple { background: #7b009c; } .indigo { background: #3c0094; } .orange { background: #f43a00; }
.who { display: flex; flex-direction: column; line-height: 14px; color: #27566f; letter-spacing: .38px; margin-left: -.5px; }
.who b { color: #1d4a66; letter-spacing: .54px; }
.msg time { color: #8a8a8a; line-height: 14px; letter-spacing: .05px; }
.msg p { grid-column: 1 / -1; line-height: 14px; letter-spacing: .48px; font-size: 12px; }
.msg.me { margin-left: 32px; height: 68px; background: #577ee8; color: #e0e8fc; grid-template-columns: 1fr auto; grid-template-rows: 30px auto; padding-left: 11px; }
.msg.me .who, .msg.me time { color: #e0e8fc; }
.bar { width: 15px; padding: 8px 2px 6px 0; display: flex; flex-direction: column; align-items: center; }
.bar i { width: 11px; height: 256px; background: #c1c1c1; margin: auto 0 5px; }
.bar svg { margin-left: 1px; }
.compose { flex: 1; border-top: 1px solid #d2d2d2; display: grid; grid-template-columns: 1fr auto; grid-template-rows: 50px auto; padding: 0 17px 0 12px; }
.ph { color: #b4bac8; letter-spacing: .36px; line-height: 36px; }
.compose svg { margin-top: 19px; }
.count { grid-column: 1 / -1; justify-self: end; margin-right: 3px; letter-spacing: -.22px; color: #58585a; line-height: 26px; }
```
